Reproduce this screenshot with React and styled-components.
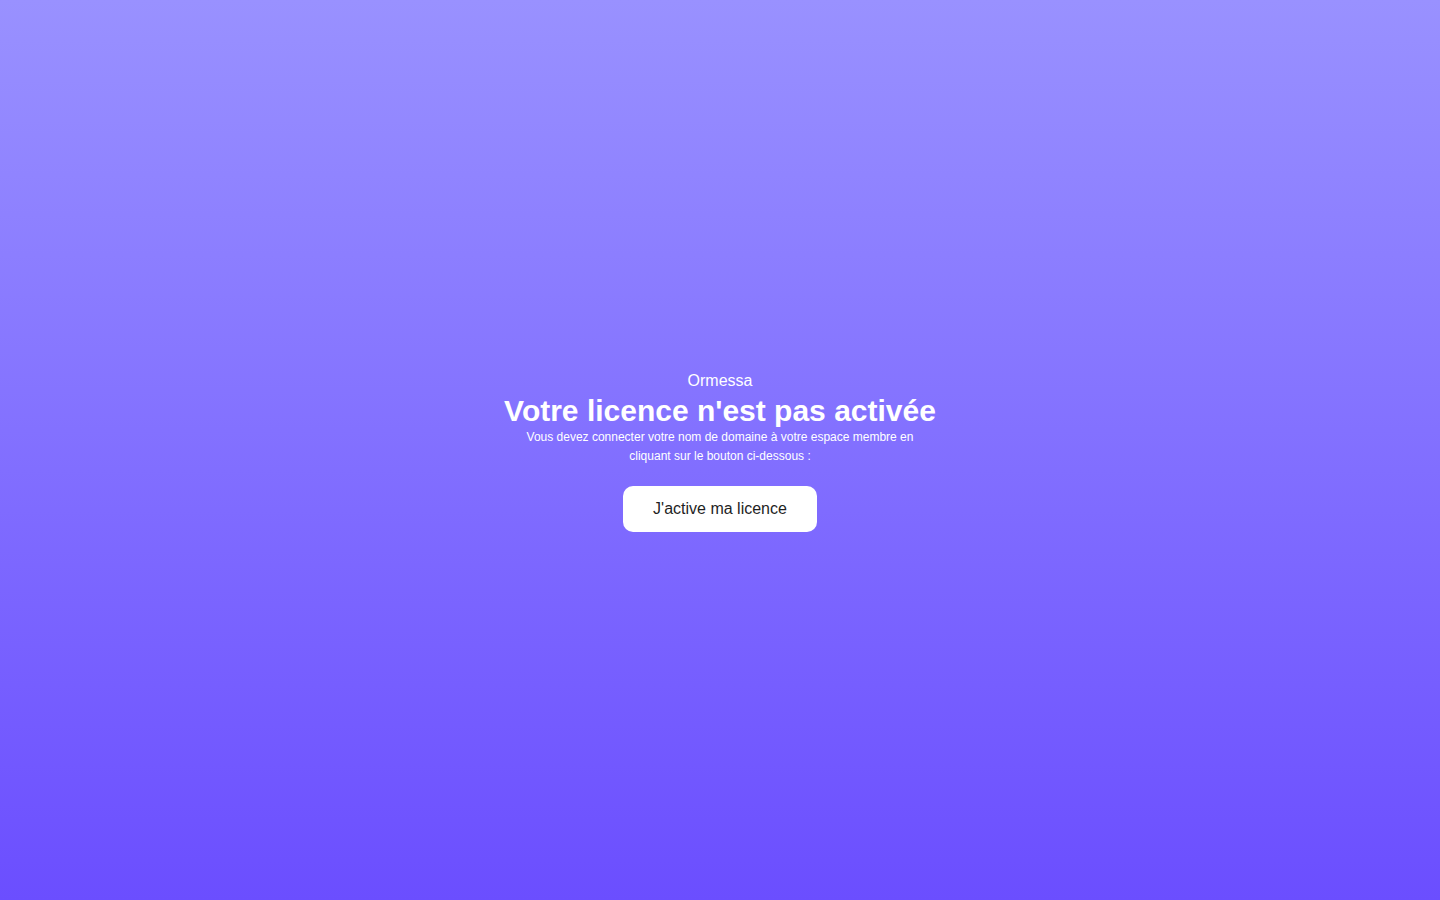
import React from "react";
import styled, { createGlobalStyle } from "styled-components";

const Global = createGlobalStyle`
  html, body { margin: 0; padding: 0; }
  body { font-family: "Liberation Sans", Arial, sans-serif; }
`;

const Page = styled.main`
  min-height: 100vh;
  box-sizing: border-box;
  padding-top: 3px;
  display: flex;
  flex-direction: column;
  align-items: center;
  justify-content: center;
  background: linear-gradient(180deg, #9991ff 0%, #6b4eff 100%);
  color: #fff;
  text-align: center;
`;

const Brand = styled.div`
  font-size: 16px;
  line-height: 20px;
  margin-bottom: 3px;
`;

const Title = styled.h1`
  margin: 0;
  font-size: 30px;
  line-height: 34px;
  font-weight: 700;
`;

const Text = styled.p`
  margin: 0;
  max-width: 400px;
  font-size: 12px;
  line-height: 19px;
`;

const Button = styled.button`
  margin-top: 20px;
  width: 194px;
  height: 46px;
  border: none;
  border-radius: 10px;
  background: #fff;
  color: #1f1f1f;
  font-family: "Liberation Sans", Arial, sans-serif;
  font-size: 16px;
  cursor: pointer;
`;

export default function App() {
  return (
    <>
      <Global />
      <Page>
        <Brand>Ormessa</Brand>
        <Title>Votre licence n'est pas activée</Title>
        <Text>
          Vous devez connecter votre nom de domaine à votre espace membre en
          cliquant sur le bouton ci-dessous :
        </Text>
        <Button>J'active ma licence</Button>
      </Page>
    </>
  );
}
